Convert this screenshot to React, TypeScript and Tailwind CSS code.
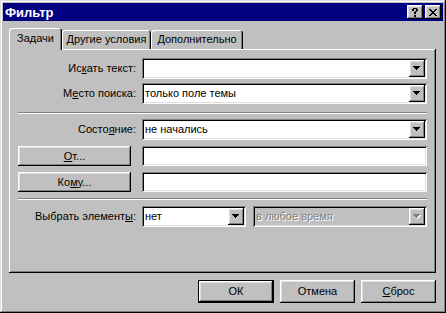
import React from "react";

const raised =
  "shadow-[inset_-1px_-1px_0_0_#000,inset_1px_1px_0_0_#fff,inset_-2px_-2px_0_0_#808080,inset_2px_2px_0_0_#dfdfdf]";
const sunken =
  "shadow-[inset_1px_1px_0_0_#808080,inset_-1px_-1px_0_0_#fff,inset_2px_2px_0_0_#000,inset_-2px_-2px_0_0_#dfdfdf]";

function Arrow({ disabled }: { disabled?: boolean }) {
  return (
    <svg width="8" height="5" viewBox="0 0 8 5" shapeRendering="crispEdges">
      {disabled && (
        <g fill="#fff">
          <rect x="1" y="1" width="7" height="1" />
          <rect x="2" y="2" width="5" height="1" />
          <rect x="3" y="3" width="3" height="1" />
          <rect x="4" y="4" width="1" height="1" />
        </g>
      )}
      <g fill={disabled ? "#808080" : "#000"}>
        <rect x="0" y="0" width="7" height="1" />
        <rect x="1" y="1" width="5" height="1" />
        <rect x="2" y="2" width="3" height="1" />
        <rect x="3" y="3" width="1" height="1" />
      </g>
    </svg>
  );
}

function Combo({
  value,
  width,
  disabled,
}: {
  value?: string;
  width: string;
  disabled?: boolean;
}) {
  return (
    <div
      className={`${width} h-[21px] flex items-stretch p-[2px] ${sunken} ${
        disabled ? "bg-[#c0c0c0]" : "bg-white"
      }`}
    >
      <div className="flex-1 flex items-center pl-[1px] overflow-hidden whitespace-nowrap">
        {disabled ? (
          <span className="text-[#808080] [text-shadow:1px_1px_0_#fff]">{value}</span>
        ) : (
          <span>{value}</span>
        )}
      </div>
      <div className={`w-[16px] flex items-center justify-center bg-[#c0c0c0] ${raised}`}>
        <Arrow disabled={disabled} />
      </div>
    </div>
  );
}

function Field({ label, children }: { label: React.ReactNode; children: React.ReactNode }) {
  return (
    <div className="flex items-center">
      <div className="w-[124px] pr-[6px] text-right whitespace-nowrap">{label}</div>
      {children}
    </div>
  );
}

function Button({
  children,
  className = "",
}: {
  children: React.ReactNode;
  className?: string;
}) {
  return (
    <div className={`flex items-center justify-center bg-[#c0c0c0] ${raised} ${className}`}>
      {children}
    </div>
  );
}

function Separator() {
  return (
    <div className="flex flex-col">
      <div className="h-px bg-[#808080]" />
      <div className="h-px bg-white" />
    </div>
  );
}

export default function App() {
  return (
    <div
      className={`w-[446px] h-[313px] bg-[#c0c0c0] p-[3px] flex flex-col text-[11px] leading-none text-black shadow-[inset_-1px_-1px_0_0_#000,inset_1px_1px_0_0_#dfdfdf,inset_-2px_-2px_0_0_#808080,inset_2px_2px_0_0_#fff]`}
      style={{ fontFamily: '"Liberation Sans", Arial, sans-serif' }}
    >
      {/* Title bar */}
      <div className="h-[18px] bg-[#000080] flex items-center pl-[2px] pr-[2px]">
        <span className="text-white font-bold text-[13px] flex-1">Фильтр</span>
        <div className={`w-[16px] h-[14px] flex items-center justify-center bg-[#c0c0c0] ${raised}`}>
          <svg width="6" height="9" viewBox="0 0 6 9" shapeRendering="crispEdges" fill="#000">
            <rect x="1" y="0" width="4" height="1" />
            <rect x="0" y="1" width="2" height="2" />
            <rect x="4" y="1" width="2" height="2" />
            <rect x="3" y="3" width="2" height="1" />
            <rect x="2" y="4" width="2" height="2" />
            <rect x="2" y="7" width="2" height="2" />
          </svg>
        </div>
        <div className={`ml-[2px] w-[16px] h-[14px] flex items-center justify-center bg-[#c0c0c0] ${raised}`}>
          <svg width="8" height="7" viewBox="0 0 8 7" shapeRendering="crispEdges" fill="#000">
            <rect x="0" y="0" width="2" height="1" />
            <rect x="6" y="0" width="2" height="1" />
            <rect x="1" y="1" width="2" height="1" />
            <rect x="5" y="1" width="2" height="1" />
            <rect x="2" y="2" width="4" height="1" />
            <rect x="3" y="3" width="2" height="1" />
            <rect x="2" y="4" width="4" height="1" />
            <rect x="1" y="5" width="2" height="1" />
            <rect x="5" y="5" width="2" height="1" />
            <rect x="0" y="6" width="2" height="1" />
            <rect x="6" y="6" width="2" height="1" />
          </svg>
        </div>
      </div>

      {/* Body */}
      <div className="flex flex-col pl-[6px] pr-[7px] pt-[7px]">
        {/* Tabs */}
        <div className="flex items-end h-[21px]">
          <div className="relative z-10 -mb-px h-[22px] w-[53px] bg-[#c0c0c0] rounded-t-[3px] flex items-center justify-center pb-[2px] shadow-[inset_1px_1px_0_0_#fff,inset_-1px_0_0_0_#000,inset_-2px_0_0_0_#808080]">
            Задачи
          </div>
          <div className="h-[19px] w-[89px] rounded-t-[3px] flex items-center justify-center shadow-[inset_1px_1px_0_0_#fff,inset_-1px_0_0_0_#000,inset_-2px_0_0_0_#808080]">
            Другие условия
          </div>
          <div className="h-[19px] w-[92px] rounded-t-[3px] flex items-center justify-center shadow-[inset_1px_1px_0_0_#fff,inset_-1px_0_0_0_#000,inset_-2px_0_0_0_#808080]">
            Дополнительно
          </div>
        </div>

        {/* Panel */}
        <div
          className={`h-[224px] flex flex-col pt-[9px] pl-[9px] pr-[9px] shadow-[inset_-1px_-1px_0_0_#000,inset_1px_1px_0_0_#fff,inset_-2px_-2px_0_0_#808080]`}
        >
          <Field
            label={
              <>
                Ис<u>к</u>ать текст:
              </>
            }
          >
            <Combo width="w-[285px]" />
          </Field>
          <div className="mt-[4px]">
            <Field
              label={
                <>
                  М<u>е</u>сто поиска:
                </>
              }
            >
              <Combo width="w-[285px]" value="только поле темы" />
            </Field>
          </div>
          <div className="mt-[8px]">
            <Separator />
          </div>
          <div className="mt-[5px]">
            <Field
              label={
                <>
                  Состо<u>я</u>ние:
                </>
              }
            >
              <Combo width="w-[285px]" value="не начались" />
            </Field>
          </div>
          <div className="mt-[6px] flex items-center">
            <Button className="w-[113px] h-[20px]">
              <span>
                <u>О</u>т...
              </span>
            </Button>
            <div className={`ml-[11px] w-[285px] h-[20px] bg-white ${sunken}`} />
          </div>
          <div className="mt-[6px] flex items-center">
            <Button className="w-[113px] h-[20px]">
              <span>
                Ко<u>м</u>у...
              </span>
            </Button>
            <div className={`ml-[11px] w-[285px] h-[20px] bg-white ${sunken}`} />
          </div>
          <div className="mt-[6px]">
            <Separator />
          </div>
          <div className="mt-[6px]">
            <Field
              label={
                <>
                  Выбрать элемент<u>ы</u>:
                </>
              }
            >
              <Combo width="w-[104px]" value="нет" />
              <div className="ml-[7px]">
                <Combo width="w-[174px]" value="в любое время" disabled />
              </div>
            </Field>
          </div>
        </div>

        {/* Buttons */}
        <div className="mt-[7px] flex justify-end gap-[6px]">
          <div className="w-[76px] h-[23px] border border-black flex">
            <Button className="flex-1">ОК</Button>
          </div>
          <Button className="w-[75px] h-[23px]">Отмена</Button>
          <Button className="w-[75px] h-[23px]">
            <span>
              <u>С</u>брос
            </span>
          </Button>
        </div>
      </div>
    </div>
  );
}
